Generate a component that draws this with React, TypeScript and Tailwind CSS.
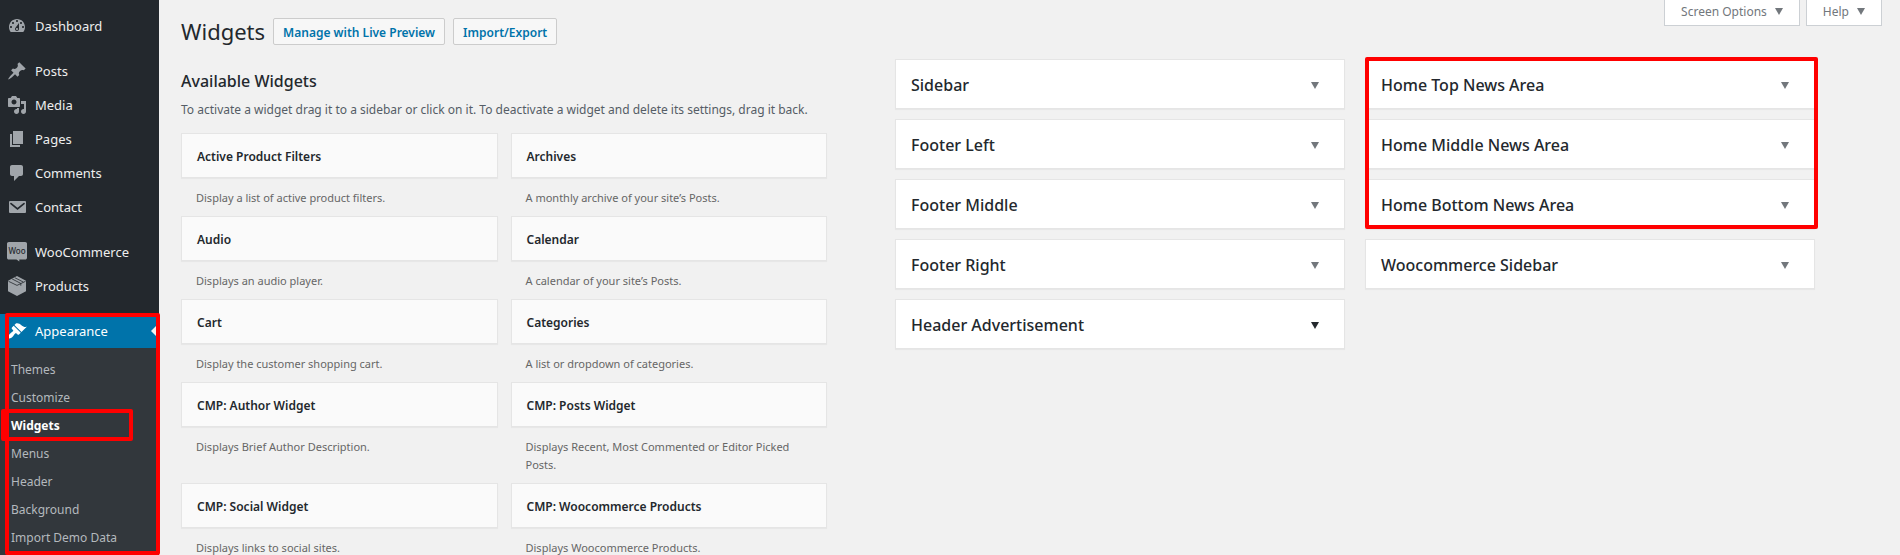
import type { ReactNode } from "react";

type MenuItem = { label: string; icon: ReactNode };
type Widget = { name: string; description: string };

const dashicons = {
  dashboard:
    "M3.76 16h12.48c1.1-1.37 1.76-3.11 1.76-5 0-4.42-3.58-8-8-8s-8 3.58-8 8c0 1.89.66 3.63 1.76 5zM10 4c.55 0 1 .45 1 1s-.45 1-1 1-1-.45-1-1 .45-1 1-1zM6 6c.55 0 1 .45 1 1s-.45 1-1 1-1-.45-1-1 .45-1 1-1zm8 0c.55 0 1 .45 1 1s-.45 1-1 1-1-.45-1-1 .45-1 1-1zm-5.37 5.55L12 7v6c0 1.1-.9 2-2 2s-2-.9-2-2c0-.57.24-1.08.63-1.45zM4 10c.55 0 1 .45 1 1s-.45 1-1 1-1-.45-1-1 .45-1 1-1zm12 0c.55 0 1 .45 1 1s-.45 1-1 1-1-.45-1-1 .45-1 1-1zm-5 3c0-.55-.45-1-1-1s-1 .45-1 1 .45 1 1 1 1-.45 1-1z",
  post: "M10.44 3.02l1.82-1.82 6.36 6.35-1.83 1.82c-1.05-.68-2.48-.57-3.41.36l-.75.75c-.92.93-1.04 2.35-.35 3.41l-1.83 1.82-2.41-2.41-2.8 2.79c-.42.42-3.38 2.71-3.8 2.29s1.86-3.39 2.28-3.81l2.79-2.79L4.1 9.36l1.83-1.82c1.05.69 2.48.57 3.4-.36l.75-.75c.93-.92 1.05-2.35.36-3.41z",
  media:
    "M13 11V4c0-.55-.45-1-1-1h-1.67L9 1H5L3.67 3H2c-.55 0-1 .45-1 1v7c0 .55.45 1 1 1h10c.55 0 1-.45 1-1zM7 4.5c1.38 0 2.5 1.12 2.5 2.5S8.38 9.5 7 9.5 4.5 8.38 4.5 7 5.62 4.5 7 4.5zM14 6h5v10.5c0 1.38-1.12 2.5-2.5 2.5S14 17.88 14 16.5s1.12-2.5 2.5-2.5c.17 0 .34.02.5.05V9h-3V6zm-4 8.05V13h2v3.5c0 1.38-1.12 2.5-2.5 2.5S7 17.88 7 16.5 8.12 14 9.5 14c.17 0 .34.02.5.05z",
  page: "M6 15V2h10v13H6zm-1 1h8v2H3V5h2v11z",
  comments:
    "M5 2h9c1.1 0 2 .9 2 2v7c0 1.1-.9 2-2 2h-2l-5 5v-5H5c-1.1 0-2-.9-2-2V4c0-1.1.9-2 2-2z",
  appearance:
    "M14.48 11.06L7.41 3.99l1.5-1.5c.5-.56 2.3-.47 3.51.32 1.21.8 1.43 1.28 2.91 2.1 1.18.64 2.45 1.26 4.45.85zm-.71.71L6.7 4.7 4.93 6.47c-.39.39-.39 1.02 0 1.41l1.06 1.06c.39.39.39 1.03 0 1.42-.6.6-1.43 1.11-2.21 1.69-.35.26-.7.53-1.01.84C1.43 14.23.4 16.08 1.4 17.07c.99 1 2.84-.03 4.18-1.36.31-.31.58-.66.85-1.02.57-.78 1.08-1.61 1.69-2.21.39-.39 1.02-.39 1.41 0l1.06 1.06c.39.39 1.02.39 1.41 0z",
};

function Dashicon({ path }: { path: string }) {
  return (
    <svg viewBox="0 0 20 20" className="size-5 shrink-0 fill-current" aria-hidden="true">
      <path d={path} fillRule="evenodd" />
    </svg>
  );
}

function MailIcon() {
  return (
    <svg viewBox="0 0 20 20" className="size-5 shrink-0 fill-current" aria-hidden="true">
      <rect x="2" y="4" width="17" height="12" rx="1" />
      <path d="M4 6.6l6.5 5.2L17 6.6" fill="none" stroke="#23282d" strokeWidth="1.7" strokeLinecap="round" />
    </svg>
  );
}

function WooIcon() {
  return (
    <svg viewBox="0 0 20 20" className="size-5 shrink-0 fill-current" aria-hidden="true">
      <path d="M1.8 0h16.4C19.3 0 20 .8 20 1.8v14c0 1-.8 1.8-1.8 1.8h-5.9v2l-2.8-2H1.8C.8 17.6 0 16.8 0 15.8v-14C0 .8.8 0 1.8 0z" />
      <text
        x="10"
        y="12"
        textAnchor="middle"
        fill="#23282d"
        className="font-['Noto_Sans',sans-serif] text-[8px] font-medium"
      >
        Woo
      </text>
    </svg>
  );
}

function BoxIcon() {
  return (
    <svg viewBox="0 0 20 20" className="size-5 shrink-0 fill-current" aria-hidden="true">
      <path d="M10 0l9 4.7v10.6L10 20l-9-4.7V4.7z" />
      <path
        d="M1.5 5.3L10 9.4l8.500-4.100M5.200 3l8.600 4.400v2.300M7.800 1.700l8.400 4.300"
        fill="none"
        stroke="#23282d"
        strokeWidth=".8"
      />
    </svg>
  );
}

const menuGroups: MenuItem[][] = [
  [{ label: "Dashboard", icon: <Dashicon path={dashicons.dashboard} /> }],
  [
    { label: "Posts", icon: <Dashicon path={dashicons.post} /> },
    { label: "Media", icon: <Dashicon path={dashicons.media} /> },
    { label: "Pages", icon: <Dashicon path={dashicons.page} /> },
    { label: "Comments", icon: <Dashicon path={dashicons.comments} /> },
    { label: "Contact", icon: <MailIcon /> },
  ],
  [
    { label: "WooCommerce", icon: <WooIcon /> },
    { label: "Products", icon: <BoxIcon /> },
  ],
];

const submenu = ["Themes", "Customize", "Widgets", "Menus", "Header", "Background", "Import Demo Data"];

const widgets: Widget[] = [
  { name: "Active Product Filters", description: "Display a list of active product filters." },
  { name: "Archives", description: "A monthly archive of your site’s Posts." },
  { name: "Audio", description: "Displays an audio player." },
  { name: "Calendar", description: "A calendar of your site’s Posts." },
  { name: "Cart", description: "Display the customer shopping cart." },
  { name: "Categories", description: "A list or dropdown of categories." },
  { name: "CMP: Author Widget", description: "Displays Brief Author Description." },
  { name: "CMP: Posts Widget", description: "Displays Recent, Most Commented or Editor Picked Posts." },
  { name: "CMP: Social Widget", description: "Displays links to social sites." },
  { name: "CMP: Woocommerce Products", description: "Displays Woocommerce Products." },
];

const leftAreas = ["Sidebar", "Footer Left", "Footer Middle", "Footer Right", "Header Advertisement"];
const newsAreas = ["Home Top News Area", "Home Middle News Area", "Home Bottom News Area"];

function Caret() {
  return (
    <svg viewBox="0 0 8 7" className="h-[7px] w-2 shrink-0 fill-current" aria-hidden="true">
      <path d="M0 0h8L4 7z" />
    </svg>
  );
}

function Sidebar() {
  return (
    <nav aria-label="Main menu" className="w-[159px] shrink-0 bg-[#23282d] pt-[9px] text-[13px]">
      {menuGroups.map((group) => (
        <ul key={group[0].label} className="mb-[11px]">
          {group.map((item) => (
            <li key={item.label}>
              <a href="#" className="flex h-[34px] items-center gap-2 pl-[7px] text-[#a0a5aa]">
                {item.icon}
                <span className="pt-px text-[#eee]">{item.label}</span>
              </a>
            </li>
          ))}
        </ul>
      ))}
      <div className="relative">
        <a href="#" className="flex h-[34px] items-center gap-2 bg-[#0073aa] pl-[7px] text-white">
          <Dashicon path={dashicons.appearance} />
          <span className="grow pt-px">Appearance</span>
          <svg viewBox="0 0 8 16" className="h-4 w-2 fill-[#f1f1f1]" aria-hidden="true">
            <path d="M8 0v16L0 8z" />
          </svg>
        </a>
        <ul className="bg-[#32373c] pt-2 pb-[3px] text-xs">
          {submenu.map((label) => (
            <li key={label} className="relative">
              <a
                href="#"
                className={
                  label === "Widgets"
                    ? "flex h-7 items-center pl-[11px] font-bold text-white"
                    : "flex h-7 items-center pl-[11px] text-[#b4b9be]"
                }
              >
                {label}
              </a>
              {label === "Widgets" && (
                <div className="pointer-events-none absolute -top-[3px] -bottom-px left-px w-[132px] rounded-xs border-4 border-[#f00]" />
              )}
            </li>
          ))}
        </ul>
        <div className="pointer-events-none absolute -top-px -right-px bottom-0 left-[5px] rounded-xs border-4 border-[#f00]" />
      </div>
    </nav>
  );
}

function WidgetArea({ name, dark = false }: { name: string; dark?: boolean }) {
  return (
    <button
      type="button"
      className="flex h-[50px] w-full items-center justify-between border border-[#e5e5e5] bg-white pt-0.5 pr-[25px] pl-[15px] text-left text-base font-medium text-[#23282d] shadow-[0_1px_1px_rgba(0,0,0,0.04)]"
    >
      {name}
      <span className={dark ? "text-[#23282d]" : "text-[#72777c]"}>
        <Caret />
      </span>
    </button>
  );
}

function WidgetCard({ name, description }: Widget) {
  return (
    <li>
      <h3 className="flex h-[45px] items-center border border-[#e5e5e5] bg-[#fafafa] px-[15px] pt-0.5 text-xs font-semibold text-[#23282d] shadow-[0_1px_1px_rgba(0,0,0,0.04)]">
        {name}
      </h3>
      <p className="px-[15px] pt-[11px] pb-[9px] text-[11px] leading-[18px] text-[#666]">{description}</p>
    </li>
  );
}

function TopTab({ label }: { label: string }) {
  return (
    <button
      type="button"
      className="flex h-[26px] items-center gap-2 border border-t-0 border-[#ccd0d4] bg-white px-4 pb-0.5 text-xs text-[#72777c]"
    >
      {label}
      <Caret />
    </button>
  );
}

export default function App() {
  return (
    <div className="flex h-screen overflow-hidden bg-[#f1f1f1] font-['Noto_Sans',sans-serif] text-[#444]">
      <Sidebar />
      <main className="min-w-0 grow pl-[22px]">
        <header className="flex h-[59px] items-start pr-[18px]">
          <h1 className="pt-[17px] text-[22px] leading-7 text-[#23282d]">Widgets</h1>
          <div className="flex grow gap-2 pt-[18px] pl-2">
            <a
              href="#"
              className="flex h-[27px] items-center rounded-xs border border-[#ccc] bg-[#f7f7f7] px-[9px] pt-0.5 text-xs font-semibold text-[#0073aa]"
            >
              Manage with Live Preview
            </a>
            <a
              href="#"
              className="flex h-[27px] items-center rounded-xs border border-[#ccc] bg-[#f7f7f7] px-[9px] pt-0.5 text-xs font-semibold text-[#0073aa]"
            >
              Import/Export
            </a>
          </div>
          <div className="flex gap-[6px]">
            <TopTab label="Screen Options" />
            <TopTab label="Help" />
          </div>
        </header>

        <div className="grid grid-cols-[646fr_920fr] gap-x-[68px] pr-[85px]">
          <section aria-labelledby="available">
            <h2 id="available" className="pt-[10px] text-base leading-6 font-medium text-[#23282d]">
              Available Widgets
            </h2>
            <p className="pt-2 pb-[14px] text-xs leading-[18px] text-[#555d66]">
              To activate a widget drag it to a sidebar or click on it. To deactivate a widget and delete its settings,
              drag it back.
            </p>
            <ul className="grid grid-cols-2 gap-x-[13px]">
              {widgets.map((widget) => (
                <WidgetCard key={widget.name} {...widget} />
              ))}
            </ul>
          </section>

          <section aria-label="Widget areas" className="grid grid-cols-2 items-start gap-x-5">
            <div className="flex flex-col gap-[10px]">
              {leftAreas.map((name) => (
                <WidgetArea key={name} name={name} dark={name === "Header Advertisement"} />
              ))}
            </div>
            <div className="flex flex-col gap-[10px]">
              <div className="relative flex flex-col gap-[10px]">
                {newsAreas.map((name) => (
                  <WidgetArea key={name} name={name} />
                ))}
                <div className="pointer-events-none absolute -top-[2px] -right-[3px] bottom-0 left-0 rounded-xs border-4 border-[#f00]" />
              </div>
              <WidgetArea name="Woocommerce Sidebar" />
            </div>
          </section>
        </div>
      </main>
    </div>
  );
}
